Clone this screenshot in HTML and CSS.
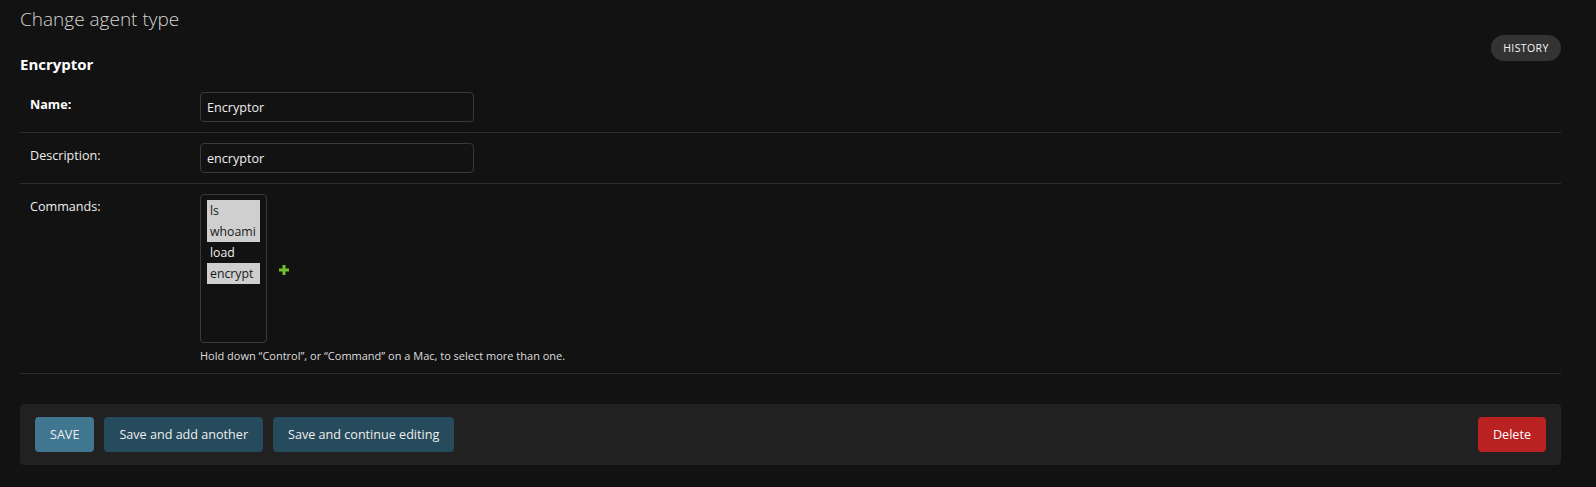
FILE: index.html
```html
<!DOCTYPE html>
<html lang="en">
<head>
<meta charset="utf-8">
<title>Change agent type</title>
<link rel="stylesheet" href="styles.css">
</head>
<body>
<div class="content">
  <h1 class="title">Change agent type</h1>
  <div class="tools"><a class="history" href="#">History</a></div>
  <h2 class="subtitle">Encryptor</h2>
  <form class="form">
    <fieldset class="module">
      <div class="form-row">
        <label class="label required">Name:</label>
        <input class="text-field" type="text" value="Encryptor">
      </div>
      <div class="form-row">
        <label class="label">Description:</label>
        <input class="text-field" type="text" value="encryptor">
      </div>
      <div class="form-row">
        <label class="label">Commands:</label>
        <div class="field-box">
          <div class="widget-wrap">
            <ul class="multi-select">
              <li class="opt selected">ls</li>
              <li class="opt selected">whoami</li>
              <li class="opt">load</li>
              <li class="opt selected">encrypt</li>
            </ul>
            <a class="add-link" href="#" title="Add another command">
              <svg width="10" height="10" viewBox="0 0 10 10"><path d="M3.5 0h3v3.5H10v3H6.5V10h-3V6.5H0v-3h3.5z" fill="#70bf2b"/></svg>
            </a>
          </div>
          <div class="help">Hold down “Control”, or “Command” on a Mac, to select more than one.</div>
        </div>
      </div>
    </fieldset>
    <div class="submit-row">
      <button type="button" class="btn btn-default">SAVE</button>
      <button type="button" class="btn">Save and add another</button>
      <button type="button" class="btn">Save and continue editing</button>
      <span class="spacer"></span>
      <a class="btn btn-delete" href="#">Delete</a>
    </div>
  </form>
</div>
</body>
</html>
```
FILE: styles.css
```css
* { box-sizing: border-box; }
html, body { margin: 0; padding: 0; }
body {
  background: #121212;
  color: #eeeeee;
  font-family: "Open Sans", "Noto Sans", "Liberation Sans", sans-serif;
  font-size: 12.6px;
  width: 1596px;
  height: 487px;
  overflow: hidden;
}
.content {
  padding: 7px 35px 0 20px;
}
.title {
  margin: 0;
  font-size: 19px;
  line-height: 24px;
  font-weight: 300;
  color: #d5d5d5;
}
.tools {
  display: flex;
  justify-content: flex-end;
  margin-top: 4px;
  height: 26px;
}
.history {
  display: block;
  height: 26px;
  width: 70px;
  border-radius: 13px;
  background: #333333;
  color: #f5f5f5;
  text-decoration: none;
  text-transform: uppercase;
  font-size: 10.5px;
  letter-spacing: 0.4px;
  line-height: 26px;
  text-align: center;
}
.subtitle {
  margin: -7px 0 0;
  font-size: 15px;
  line-height: 20px;
  font-weight: 700;
  color: #ffffff;
}
.form { margin: 0; }
.module {
  margin: 8px 0 30px;
  padding: 0;
  border: 0;
}
.form-row {
  display: flex;
  align-items: flex-start;
  padding: 10px;
  border-bottom: 1px solid #2c2c2c;
}
.label {
  width: 170px;
  flex: none;
  padding: 5px 10px 0 0;
  line-height: 16px;
  color: #eeeeee;
}
.label.required { font-weight: 700; color: #ffffff; }
.text-field {
  width: 274px;
  height: 30px;
  padding: 5px 6px;
  border: 1px solid #3a3a3a;
  border-radius: 4px;
  background: #121212;
  color: #eeeeee;
  font: inherit;
  outline: none;
}
.field-box { display: flex; flex-direction: column; }
.widget-wrap { display: flex; align-items: center; }
.multi-select {
  list-style: none;
  margin: 0;
  width: 67px;
  height: 149px;
  padding: 5px 6px;
  border: 1px solid #3a3a3a;
  border-radius: 4px;
  background: #121212;
}
.opt {
  height: 21px;
  line-height: 21px;
  padding: 0 3px;
  font-size: 12.3px;
  color: #eeeeee;
  white-space: nowrap;
  overflow: hidden;
}
.opt.selected { background: #cfcfcf; color: #1a1a1a; }
.add-link {
  display: flex;
  margin-left: 12px;
  margin-top: 3px;
}
.help {
  margin-top: 5px;
  font-size: 11px;
  line-height: 15px;
  color: #dddddd;
  white-space: nowrap;
}
.submit-row {
  display: flex;
  gap: 10px;
  align-items: center;
  padding: 12px 14px;
  background: #212121;
  border: 1px solid #232323;
  border-radius: 4px;
}
.spacer { flex: 1; }
.btn {
  border: 0;
  border-radius: 4px;
  height: 35px;
  padding: 0 15px;
  background: #264b5d;
  color: #eeeeee;
  font: inherit;
  line-height: 35px;
  text-decoration: none;
  display: inline-block;
  cursor: pointer;
}
.btn-default { background: #417690; }
.btn-delete { background: #ba2121; color: #ffffff; }
```
